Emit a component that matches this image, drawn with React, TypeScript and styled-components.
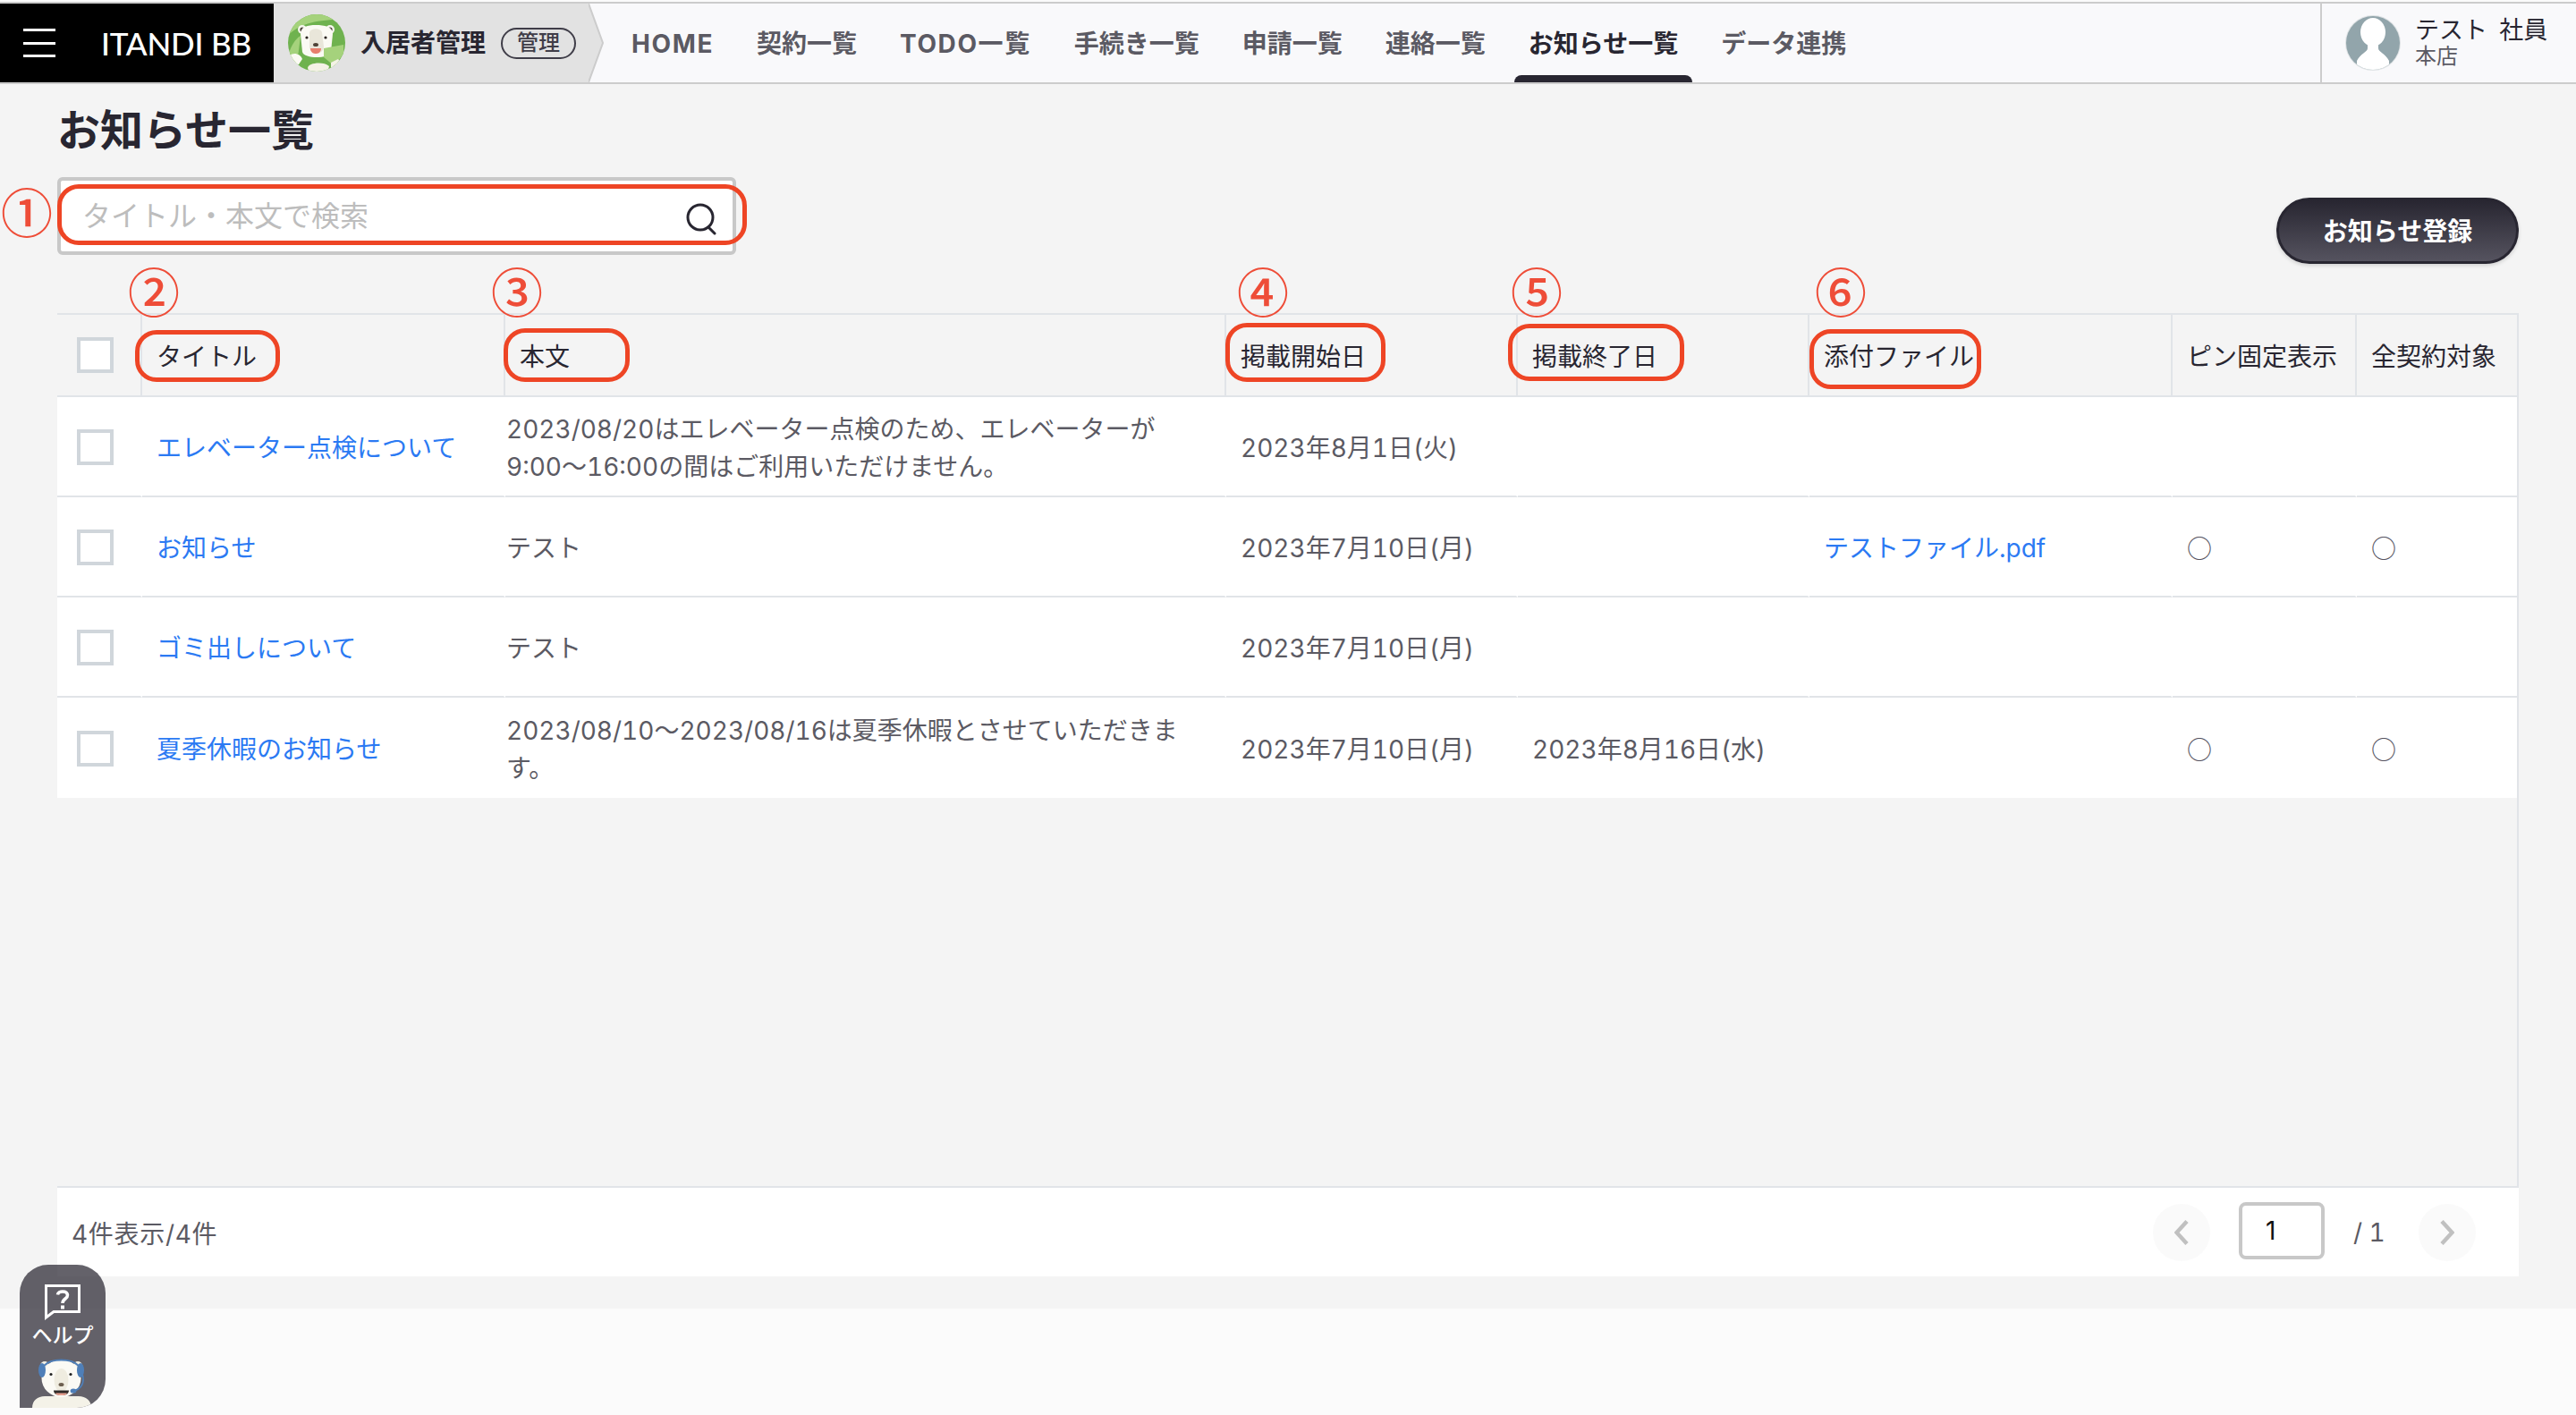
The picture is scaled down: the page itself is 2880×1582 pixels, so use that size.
import { createGlobalStyle, styled } from "styled-components";

const FONT = `"Inter", "Noto Sans CJK JP", sans-serif`;
const INK = "#282631";
const BODY_TEXT = "#5b5a63";
const LINK = "#2b7af3";
const RULE = "#e1e4e8";
const MARK = "#ee4525";

const GlobalStyle = createGlobalStyle`
  * { box-sizing: border-box; }
  body {
    margin: 0;
    background: #fbfbfb;
    font-family: ${FONT};
    font-variant-numeric: tabular-nums;
    color: ${INK};
  }
`;

const Page = styled.div`
  position: relative;
  width: 2880px;
  height: 1582px;
  overflow: hidden;
  padding-top: 2px;
`;

/* ---------- top bar ---------- */

const TopBar = styled.header`
  display: flex;
  height: 92px;
  background: #f9f9fb;
  border-top: 2px solid #cccccc;
  border-bottom: 2px solid #cccccc;
`;

const Brand = styled.div`
  display: flex;
  align-items: center;
  width: 306px;
  padding-left: 26px;
  background: #000;
  color: #fff;
`;

const Burger = styled.div`
  display: flex;
  flex-direction: column;
  justify-content: space-between;
  width: 36px;
  height: 32px;
  margin-right: 51px;
  span {
    display: block;
    height: 3px;
    background: #fff;
  }
`;

const BrandName = styled.span`
  font-family: "Lato", sans-serif;
  font-size: 35px;
  font-weight: 500;
  letter-spacing: -0.2px;
  white-space: nowrap;
`;

const AppTag = styled.div`
  display: flex;
  align-items: center;
  width: 352px;
  padding-left: 16px;
  background: #e2e2e2;
`;

const AppName = styled.span`
  margin-left: 17px;
  font-size: 28px;
  font-weight: 700;
  line-height: 1;
  white-space: nowrap;
`;

const RoleBadge = styled.span`
  display: flex;
  align-items: center;
  justify-content: center;
  width: 84px;
  height: 35px;
  margin-left: 17px;
  border: 2px solid #3f3d48;
  border-radius: 18px;
  color: #3f3d48;
  font-size: 24px;
  font-weight: 500;
  line-height: 1;
`;

const Arrow = styled.svg`
  flex: none;
  display: block;
  width: 18px;
  height: 88px;
`;

const Nav = styled.nav`
  display: flex;
  margin-left: 6px;
`;

const Tab = styled.a<{ $active?: boolean; $latin?: boolean }>`
  position: relative;
  display: flex;
  align-items: center;
  margin: 0 8px;
  padding: 2px 16px 0;
  color: ${(p) => (p.$active ? INK : BODY_TEXT)};
  font-size: 28px;
  font-weight: 700;
  letter-spacing: ${(p) => (p.$latin ? "1.6px" : "0")};
  line-height: 1;
  white-space: nowrap;
  &::after {
    content: "";
    display: ${(p) => (p.$active ? "block" : "none")};
    position: absolute;
    left: 0;
    right: 0;
    bottom: 0;
    height: 8px;
    border-radius: 8px 8px 0 0;
    background: ${INK};
  }
`;

const UserBox = styled.div`
  display: flex;
  align-items: center;
  gap: 15px;
  margin-left: auto;
  width: 286px;
  padding-left: 25px;
  border-left: 2px solid #cccccc;
`;

const UserText = styled.div`
  display: flex;
  flex-direction: column;
  gap: 1px;
  margin-top: -2px;
`;

const UserName = styled.span`
  font-size: 27px;
  line-height: 30px;
  word-spacing: 6px;
  white-space: pre;
`;

const UserShop = styled.span`
  color: ${BODY_TEXT};
  font-size: 24px;
  line-height: 26px;
`;

/* ---------- page body ---------- */

const Main = styled.main`
  height: 1369px;
  padding: 0 64px;
  background: #f4f4f4;
`;

const Title = styled.h1`
  margin: 0;
  padding: 28px 0 28px;
  font-size: 48px;
  font-weight: 700;
  line-height: 48px;
`;

const Toolbar = styled.div`
  display: flex;
  justify-content: space-between;
  align-items: flex-start;
  height: 152px;
`;

const SearchBox = styled.label`
  display: flex;
  align-items: center;
  width: 759px;
  height: 87px;
  padding: 0 18px 0 24px;
  background: #fff;
  border: 4px solid #c8c8c8;
  border-radius: 6px;
`;

const SearchInput = styled.input`
  flex: 1;
  min-width: 0;
  height: 44px;
  border: 0;
  outline: 0;
  padding: 0;
  background: none;
  color: ${INK};
  font-family: ${FONT};
  font-size: 32px;
  &::placeholder {
    color: #bdbdbd;
    opacity: 1;
  }
`;

const SearchGlyph = styled.svg`
  flex: none;
  margin-top: 6px;
`;

const PrimaryButton = styled.button`
  width: 271px;
  height: 74px;
  margin-top: 23px;
  padding: 2px 0 0;
  border: 3px solid ${INK};
  border-radius: 37px;
  background: linear-gradient(180deg, #282631 0%, #55535f 100%);
  box-shadow: 0 2px 4px rgba(0, 0, 0, 0.15);
  color: #fff;
  font-family: ${FONT};
  font-size: 28px;
  font-weight: 700;
  line-height: 1;
`;

const TableFrame = styled.section`
  height: 978px;
  border-right: 2px solid ${RULE};
  border-bottom: 2px solid ${RULE};
`;

const Table = styled.table`
  width: 2750px;
  table-layout: fixed;
  border-collapse: separate;
  border-spacing: 0;
  font-size: 28px;
`;

const HeadCell = styled.th`
  height: 94px;
  padding: 0 0 0 16px;
  border-top: 2px solid ${RULE};
  border-bottom: 2px solid ${RULE};
  border-right: 2px solid ${RULE};
  color: ${INK};
  font-weight: 400;
  text-align: left;
  white-space: nowrap;
  &:last-child {
    border-right: 0;
  }
`;

const Row = styled.tr`
  background: #fff;
  &:last-child td {
    border-bottom: 0;
  }
`;

const Cell = styled.td<{ $flush?: boolean }>`
  height: 112px;
  padding: 4px 0 0 ${(p) => (p.$flush ? "1px" : "16px")};
  border-bottom: 2px solid ${RULE};
  border-right: 2px solid #fff;
  color: ${BODY_TEXT};
  line-height: 42px;
  white-space: pre-line;
  &:last-child {
    border-right: 0;
  }
`;

const CheckCell = styled(Cell)`
  padding: 2px 0 0 22px;
`;

const HeadCheckCell = styled(HeadCell)`
  padding-left: 22px;
`;

const CheckBox = styled.span`
  display: block;
  width: 41px;
  height: 40px;
  background: #fff;
  border: 4px solid #d0d6db;
`;

const DocLink = styled.a`
  color: ${LINK};
  white-space: nowrap;
`;

const Flag = styled.span`
  color: #55535f;
  font-family: "Noto Sans CJK JP", sans-serif;
  font-size: 28px;
`;

const TableFooter = styled.footer`
  display: flex;
  align-items: center;
  justify-content: space-between;
  height: 99px;
  padding: 0 48px 0 16px;
  background: #fff;
  color: ${BODY_TEXT};
  font-size: 28px;
`;

const ResultCount = styled.span`
  letter-spacing: 0.7px;
`;

const Pager = styled.div`
  display: flex;
  align-items: center;
`;

const PagerArrow = styled.button`
  display: flex;
  align-items: center;
  justify-content: center;
  width: 64px;
  height: 64px;
  padding: 0;
  border: 0;
  border-radius: 50%;
  background: #fafafa;
`;

const PageInput = styled.input`
  width: 96px;
  height: 64px;
  margin: -3px 32px 0;
  padding: 0 0 0 26px;
  background: #fff;
  border: 4px solid #c8c8c8;
  border-radius: 8px;
  color: #111;
  font-family: ${FONT};
  font-size: 28px;
  outline: 0;
`;

const PageTotal = styled.span`
  width: 73px;
  white-space: pre;
`;

/* ---------- floating help ---------- */

const HelpTab = styled.aside`
  position: absolute;
  left: 22px;
  top: 1414px;
  display: flex;
  flex-direction: column;
  align-items: center;
  width: 96px;
  height: 160px;
  padding-top: 22px;
  overflow: hidden;
  background: rgba(40, 38, 49, 0.72);
  border-radius: 32px 32px 32px 0;
  color: #fff;
`;

const HelpLabel = styled.span`
  margin-top: 3px;
  font-size: 23px;
  line-height: 28px;
  font-weight: 500;
  white-space: nowrap;
`;

const HelpBear = styled.svg`
  position: absolute;
  left: 8px;
  bottom: 0;
  display: block;
`;

/* ---------- red review marks laid over the shot ---------- */

const Ring = styled.span<{ $x: number; $y: number; $w: number; $h: number }>`
  position: absolute;
  left: ${(p) => p.$x}px;
  top: ${(p) => p.$y}px;
  width: ${(p) => p.$w}px;
  height: ${(p) => p.$h}px;
  border: 5px solid ${MARK};
  border-radius: 24px;
`;

const Num = styled.span<{ $x: number; $y: number }>`
  position: absolute;
  left: ${(p) => p.$x}px;
  top: ${(p) => p.$y}px;
  width: 51px;
  height: 51px;
  color: #ee4d38;
  font-family: "Noto Sans CJK JP", sans-serif;
  font-size: 58px;
  font-weight: 500;
  line-height: 51px;
  text-align: center;
`;

const RINGS = [
  { x: 64, y: 206, w: 771, h: 68 },
  { x: 151, y: 369, w: 162, h: 58 },
  { x: 563, y: 367, w: 141, h: 60 },
  { x: 1370, y: 361, w: 179, h: 66 },
  { x: 1686, y: 362, w: 197, h: 64 },
  { x: 2023, y: 368, w: 192, h: 67 },
];

const NUMS = [
  { t: "①", x: 1, y: 210 },
  { t: "②", x: 143, y: 299 },
  { t: "③", x: 549, y: 299 },
  { t: "④", x: 1383, y: 299 },
  { t: "⑤", x: 1689, y: 299 },
  { t: "⑥", x: 2029, y: 299 },
];

const TABS = ["HOME", "契約一覧", "TODO一覧", "手続き一覧", "申請一覧", "連絡一覧", "お知らせ一覧", "データ連携"];

const COLS = [95, 406, 806, 326, 326, 406, 206, 179];

const HEADS = ["タイトル", "本文", "掲載開始日", "掲載終了日", "添付ファイル", "ピン固定表示", "全契約対象"];

const ROWS = [
  {
    title: "エレベーター点検について",
    body: "2023/08/20はエレベーター点検のため、エレベーターが\n9:00〜16:00の間はご利用いただけません。",
    from: "2023年8月1日(火)",
    to: "",
    file: "",
    flags: false,
  },
  {
    title: "お知らせ",
    body: "テスト",
    from: "2023年7月10日(月)",
    to: "",
    file: "テストファイル.pdf",
    flags: true,
  },
  {
    title: "ゴミ出しについて",
    body: "テスト",
    from: "2023年7月10日(月)",
    to: "",
    file: "",
    flags: false,
  },
  {
    title: "夏季休暇のお知らせ",
    body: "2023/08/10〜2023/08/16は夏季休暇とさせていただきま\nす。",
    from: "2023年7月10日(月)",
    to: "2023年8月16日(水)",
    file: "",
    flags: true,
  },
];

function BearBadge() {
  return (
    <svg width="64" height="64" viewBox="0 0 64 64" style={{ flex: "none" }}>
      <defs>
        <clipPath id="badge">
          <circle cx="32" cy="32" r="32" />
        </clipPath>
      </defs>
      <g clipPath="url(#badge)">
        <rect width="64" height="64" fill="#6fb24f" />
        <path d="M0 24C10 12 30 6 56 6L44 -2H6Z" fill="#a5d27c" />
        <path d="M0 46C4 34 8 28 14 24L10 56Z" fill="#a5d27c" />
        <circle cx="16" cy="17" r="5" fill="#f7f6ef" />
        <circle cx="47" cy="17" r="5" fill="#f7f6ef" />
        <circle cx="16" cy="17" r="2.6" fill="#4a4038" />
        <circle cx="47" cy="17" r="2.6" fill="#4a4038" />
        <path d="M14 22C14 14 22 12 31 12C41 12 50 14 50 22L48 42C46 50 18 50 16 42Z" fill="#fbfaf4" />
        <path d="M24 20C26 15 36 15 38 20L40 36C40 46 24 46 24 36Z" fill="#e9e6da" />
        <circle cx="21" cy="26" r="1.6" fill="#2b2420" />
        <circle cx="42" cy="26" r="1.6" fill="#2b2420" />
        <ellipse cx="31" cy="34" rx="3" ry="2" fill="#4f4338" />
        <path d="M25 38H37C37 43 33 44 31 44C29 44 25 43 25 38Z" fill="#e77f6e" />
        <path d="M40 38L62 34V44L52 58L40 48Z" fill="#a5d27c" />
        <path d="M2 46C6 42 14 44 16 50L12 56H4Z" fill="#fbfaf4" />
        <path d="M22 60C22 54 40 52 46 58L44 66H24Z" fill="#f4f2e6" />
        <path d="M48 54L56 50L60 56L54 64H48Z" fill="#f4f2e6" />
      </g>
    </svg>
  );
}

function Avatar() {
  return (
    <svg width="64" height="64" viewBox="0 0 64 64" style={{ flex: "none" }}>
      <defs>
        <clipPath id="avatar">
          <circle cx="32" cy="32" r="30" />
        </clipPath>
      </defs>
      <circle cx="32" cy="32" r="31" fill="#dfe3e5" />
      <g clipPath="url(#avatar)">
        <rect width="64" height="64" fill="#92a5ab" />
        <ellipse cx="32" cy="20" rx="14" ry="16" fill="#fff" />
        <path d="M26 30H38V38C38 42 46 44 50 52V66H14V52C18 44 26 42 26 38Z" fill="#fff" />
      </g>
    </svg>
  );
}

function SearchIcon() {
  return (
    <SearchGlyph width="34" height="36" viewBox="0 0 34 36" fill="none" stroke={INK} strokeWidth="3">
      <circle cx="16" cy="16" r="14" />
      <path d="M25 27L32 34" strokeLinecap="round" />
    </SearchGlyph>
  );
}

function Chevron({ left }: { left?: boolean }) {
  return (
    <svg width="16" height="28" viewBox="0 0 16 28" fill="none" stroke="#c0c0c0" strokeWidth="4.5">
      <path d={left ? "M14 1.5L2.5 14L14 26.5" : "M2 1.5L13.5 14L2 26.5"} />
    </svg>
  );
}

function HelpIcon() {
  return (
    <svg width="40" height="40" viewBox="0 0 40 40" fill="none" stroke="#fff" strokeWidth="3" style={{ flex: "none" }}>
      <path d="M1.5 1.5H38.5V30.5H10L1.5 37Z" />
      <path d="M14.5 11.5C15 7 25 6.5 25.5 12C25.8 16 20 16 20 21" strokeWidth="3.6" />
      <rect x="18" y="23.5" width="4" height="4" fill="#fff" stroke="none" />
    </svg>
  );
}

export default function App() {
  return (
    <Page>
      <GlobalStyle />
      <TopBar>
        <Brand>
          <Burger>
            <span />
            <span />
            <span />
          </Burger>
          <BrandName>ITANDI BB</BrandName>
        </Brand>
        <AppTag>
          <BearBadge />
          <AppName>入居者管理</AppName>
          <RoleBadge>管理</RoleBadge>
        </AppTag>
        <Arrow viewBox="0 0 18 88">
          <path d="M0 0L16 44L0 88Z" fill="#e2e2e2" />
          <path d="M0 0L16 44L0 88" fill="none" stroke="#cccccc" strokeWidth="2" />
        </Arrow>
        <Nav>
          {TABS.map((t) => (
            <Tab key={t} $active={t === "お知らせ一覧"} $latin={t === "HOME" || t === "TODO一覧"}>
              {t}
            </Tab>
          ))}
        </Nav>
        <UserBox>
          <Avatar />
          <UserText>
            <UserName>テスト 社員</UserName>
            <UserShop>本店</UserShop>
          </UserText>
        </UserBox>
      </TopBar>

      <Main>
        <Title>お知らせ一覧</Title>
        <Toolbar>
          <SearchBox>
            <SearchInput placeholder="タイトル・本文で検索" readOnly />
            <SearchIcon />
          </SearchBox>
          <PrimaryButton>お知らせ登録</PrimaryButton>
        </Toolbar>

        <TableFrame>
          <Table>
            <colgroup>
              {COLS.map((w, i) => (
                <col key={i} width={w} />
              ))}
            </colgroup>
            <thead>
              <tr>
                <HeadCheckCell>
                  <CheckBox />
                </HeadCheckCell>
                {HEADS.map((h) => (
                  <HeadCell key={h}>{h}</HeadCell>
                ))}
              </tr>
            </thead>
            <tbody>
              {ROWS.map((r) => (
                <Row key={r.title}>
                  <CheckCell>
                    <CheckBox />
                  </CheckCell>
                  <Cell>
                    <DocLink>{r.title}</DocLink>
                  </Cell>
                  <Cell $flush>{r.body}</Cell>
                  <Cell>{r.from}</Cell>
                  <Cell>{r.to}</Cell>
                  <Cell>{r.file && <DocLink>{r.file}</DocLink>}</Cell>
                  <Cell>{r.flags && <Flag>○</Flag>}</Cell>
                  <Cell>{r.flags && <Flag>○</Flag>}</Cell>
                </Row>
              ))}
            </tbody>
          </Table>
        </TableFrame>

        <TableFooter>
          <ResultCount>4件表示/4件</ResultCount>
          <Pager>
            <PagerArrow>
              <Chevron left />
            </PagerArrow>
            <PageInput defaultValue="1" readOnly />
            <PageTotal>/ 1</PageTotal>
            <PagerArrow>
              <Chevron />
            </PagerArrow>
          </Pager>
        </TableFooter>
      </Main>

      <HelpTab>
        <HelpIcon />
        <HelpLabel>ヘルプ</HelpLabel>
        <HelpBear width="80" height="58" viewBox="0 0 80 58">
          <path d="M6 58C6 50 12 45 20 45H58C66 45 72 50 72 58Z" fill="#f4f2e8" />
          <circle cx="20" cy="11" r="5" fill="#f3f0e4" />
          <circle cx="57" cy="11" r="5" fill="#f3f0e4" />
          <ellipse cx="38.5" cy="25" rx="22" ry="21" fill="#fbfaf5" />
          <ellipse cx="38.5" cy="27" rx="8" ry="13" fill="#efece0" />
          <circle cx="27" cy="20.5" r="1.6" fill="#222" />
          <circle cx="49" cy="20.5" r="1.6" fill="#222" />
          <ellipse cx="38.5" cy="32" rx="3" ry="2" fill="#6d5f50" />
          <path d="M30 38.5H47C47 43 42 44 38.5 44C35 44 30 43 30 38.5Z" fill="#2f2a28" />
          <path d="M32 41.5H45C44 44 41 44 38.5 44C36 44 33 44 32 41.5Z" fill="#e8a08f" />
          <path d="M17 15C20 7 28 4.5 38.5 4.5C49 4.5 57 7 60 15" fill="none" stroke="#4f7fb8" strokeWidth="2.2" />
          <ellipse cx="17" cy="16" rx="4" ry="8" fill="#4f7fb8" />
          <ellipse cx="60" cy="16" rx="4" ry="8" fill="#4f7fb8" />
          <path d="M62 20C65 30 61 37 52 39" fill="none" stroke="#4f7fb8" strokeWidth="1.8" />
          <ellipse cx="52" cy="39" rx="3.4" ry="2.6" fill="#4f7fb8" />
        </HelpBear>
      </HelpTab>

      {RINGS.map((r) => (
        <Ring key={r.x} $x={r.x} $y={r.y} $w={r.w} $h={r.h} />
      ))}
      {NUMS.map((n) => (
        <Num key={n.t} $x={n.x} $y={n.y}>
          {n.t}
        </Num>
      ))}
    </Page>
  );
}
